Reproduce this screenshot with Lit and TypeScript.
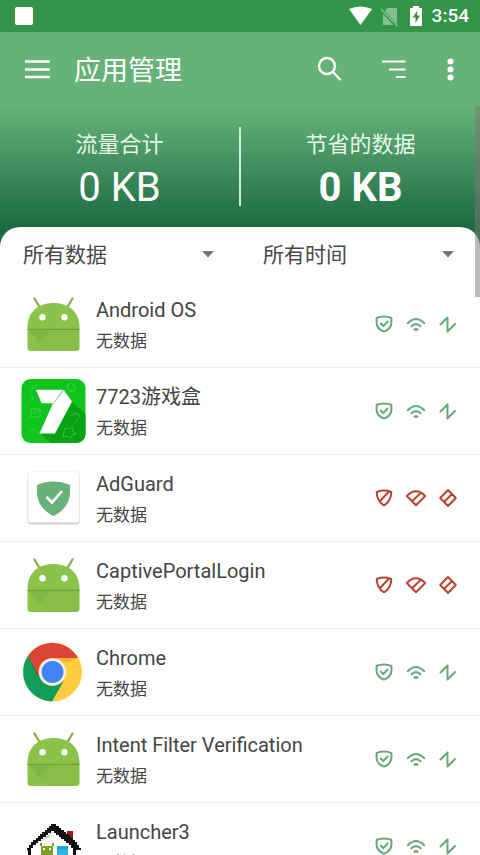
import { LitElement, html, css, svg, nothing } from "lit";
import { customElement, property } from "lit/decorators.js";

type IconName = "android" | "game" | "adguard" | "chrome" | "launcher";

interface AppEntry {
  name: string;
  icon: IconName;
  allowed: boolean;
}

const APPS: AppEntry[] = [
  { name: "Android OS", icon: "android", allowed: true },
  { name: "7723游戏盒", icon: "game", allowed: true },
  { name: "AdGuard", icon: "adguard", allowed: false },
  { name: "CaptivePortalLogin", icon: "android", allowed: false },
  { name: "Chrome", icon: "chrome", allowed: true },
  { name: "Intent Filter Verification", icon: "android", allowed: true },
  { name: "Launcher3", icon: "launcher", allowed: true },
];

const ART = {
  android: svg`
    <path d="M13.500 6.500 18.500 15M51.500 6.500 46.500 15" stroke="#86b04f" stroke-width="2.400" stroke-linecap="round"/>
    <path d="M6.500 37V36C6.500 20 17 11 32.500 11S58.500 20 58.500 36V37Z" fill="#8bc34a"/>
    <path d="M6.500 37H58.500V55.500Q58.500 59 55 59H10Q6.500 59 6.500 55.500Z" fill="#8ac249"/>
    <path d="M7 37.500H30L19 51Z" fill="#7cb043" opacity=".7"/>
    <path d="M19 51 30 37.500H58V58H26Z" fill="#84ba46" opacity=".4"/>
    <path d="M6.500 37.400H58.500" stroke="#6fa03d" stroke-width="1.200"/>
    <circle cx="21.500" cy="25.300" r="3.200" fill="#fff"/><circle cx="43.500" cy="25.300" r="3.200" fill="#fff"/>`,
  game: svg`
    <rect x=".5" y="0" width="64" height="64" rx="9" fill="#0fc51d"/>
    <path d="M50.500 22 64.500 35V55A9 9 0 0 1 55.500 64H30L19 54Z" fill="#06a313"/>
    <g fill="none" stroke="#56dc5a" stroke-width="1" opacity=".6">
      <path d="M10 12q1-5 6-6M9 16l4 3-4 3M46 6l4-2 5 4-3 5-5-2zM10 30h9v8h-9zM12 33l2 2 3-3M50 37q3-4 7-2t-1 6l-2 3M8 54l5-4 6 5 4-2M44 49l4 1 3-2 1 4 3 3-4 1-1 3-4-2-4 1 1-5z"/>
    </g>
    <path d="M15 10.700H42L32 24.200H20.500ZM42.800 11 51 22.500 34 54.500H18.500L32 24.200Z" fill="#fff"/>
    <path d="M42.500 11 32 25" stroke="#9ad99c" stroke-width="1"/>`,
  adguard: svg`
    <rect x="6.500" y="6.500" width="52" height="52" rx="3" fill="#cfcfcf"/>
    <rect x="7" y="5.500" width="51" height="51" rx="3" fill="#fff" stroke="#ededed" stroke-width=".6"/>
    <path d="M32.500 15.500C37 15.500 44 16.500 49 19V26C49 37 42 45.500 32.500 50 23 45.500 16 37 16 26V19C21 16.500 28 15.500 32.500 15.500Z" fill="#67b279"/>
    <path d="M25.500 31 31 36.500 41 25" fill="none" stroke="#fff" stroke-width="2.600"/>`,
  chrome: svg`
    <circle cx="31.500" cy="32" r="29.500" fill="#ffcd40"/>
    <path d="M7 15.800A29.500 29.500 0 0 1 57 18H31.500A14 14 0 0 0 19 38.500Z" fill="#db4437"/>
    <path d="M7 15.800A29.500 29.500 0 0 0 31 61.500L43.500 39.500A14 14 0 0 1 19.500 39Z" fill="#0f9d58"/>
    <path d="M31.500 18H57L46 22.500Z" fill="#e2a52f" opacity=".6"/>
    <path d="M7 15.800 19.500 38.500 15 33.500Z" fill="#8f3c2a" opacity=".7"/>
    <circle cx="31.500" cy="32" r="13.500" fill="#f1f1f1"/>
    <circle cx="31.500" cy="32" r="11" fill="#4285f4"/>`,
  launcher: svg`
    <path d="M46 17h6v12h-6z" fill="#a3161c"/>
    <path d="M12 33 32.500 15 53 33V60H12Z" fill="#fff"/>
    <path d="M18 29 32 17 28 23Z" fill="#c9c9c9"/>
    <path shape-rendering="crispEdges" fill="#111" d="M30 10h5v2h3v2h2v2h3v2h2v2h3v2h2v2h2v2h2v2h2v3h2v3h2v2h-5v25h-3V34h-2v-3h-2v-2h-3v-2h-2v-2h-3v-2h-2v-2h-3v-2h-2v-2h-3v2h-3v2h-2v2h-3v2h-2v2h-3v2h-2v2h-3v3h-2v27h-3V36H6v-2h2v-3h2v-3h2v-2h3v-2h2v-2h2v-2h2v-2h3v-2h2v-2h2v-2h2z"/>
    <path d="M19 29h2v3h10v-3h2v3h-1v10H20V32h-1z" fill="#7da120"/>
    <path d="M22 34h2v2h-2zM28 34h2v2h-2z" fill="#fff"/>
    <path d="M36 32h11v11H36z" fill="#2bb3e3"/><path d="M36 34h11" stroke="#1789b4" stroke-width="1"/>`,
};

const SIGNS = {
  on: [
    svg`<path d="M12 4.500c2.600 0 5.200.5 7.400 1.500v4.700c0 4.200-3.100 7.200-7.400 9-4.300-1.800-7.400-4.800-7.400-9V6c2.200-1 4.800-1.500 7.400-1.500Z"/><path d="m8.700 11.500 2.600 2.600 4.300-4.600"/>`,
    svg`<path d="M3.800 11.200q8.200-8.400 16.400 0M7.400 14.300q4.600-4.400 9.200 0"/><path d="M10.800 17.500h2.400" stroke-width="2.400"/>`,
    svg`<path d="m4.500 12.500 7-7v14l7.500-7.500"/>`,
  ],
  off: [
    svg`<path d="M12 4.600c2.500 0 5 .5 7.300 1.400 0 6-2.500 10.500-7.300 13.500C7.200 16.500 4.700 12 4.700 6c2.300-.9 4.800-1.400 7.300-1.400ZM16.500 6 8 15"/>`,
    svg`<path d="M2.800 10q9.200-9.500 18.400 0L12 19.300ZM17 6.800 8 15.200"/>`,
    svg`<path d="m12 4 7.800 8-7.800 8-7.800-8ZM16 8l-8 8"/>`,
  ],
};
const SIGN_LABELS = ["防护", "Wi-Fi", "移动数据"];

@customElement("status-bar")
class StatusBar extends LitElement {
  static styles = css`
    :host {
      display: flex;
      align-items: center;
      height: 32px;
      flex: none;
      padding: 0 11px 0 15px;
      background: #33954a;
      color: #fff;
    }
    .note {
      width: 18px;
      height: 18px;
      border-radius: 2px;
      background: #fff;
    }
    .spacer {
      flex: 1;
    }
    .glyphs {
      width: 76px;
      height: 24px;
      margin-right: 8px;
    }
    .time {
      font-size: 19px;
      line-height: 24px;
      font-weight: 500;
    }
  `;
  render() {
    return html`
      <span class="note"></span>
      <span class="spacer"></span>
      <svg class="glyphs" viewBox="0 0 76 24" fill="#fff" aria-hidden="true">
        <path d="M1 5Q12.500 0 24 5L12.500 21Z" />
        <path d="M39 4h10v16L37 7zM35 10 45.500 21H35z" opacity=".4" />
        <path d="m33 5 16.500 17" stroke="#fff" stroke-width="1.500" opacity=".4" />
        <path fill-rule="evenodd" d="M65 2h6v2h3v18H62V4h3zM69.500 6.500 64.500 13.500h3v5.500l4.500-7.500h-3z" />
      </svg>
      <span class="time">3:54</span>
    `;
  }
}

@customElement("app-bar")
class AppBar extends LitElement {
  static styles = css`
    :host {
      display: flex;
      align-items: center;
      height: 74px;
      flex: none;
      padding: 0 5px 0 12px;
      background: #67b279;
      color: #fff;
    }
    h1 {
      flex: 1;
      margin: 0;
      padding: 4px 0 0 12px;
      font-size: 27px;
      line-height: 40px;
      font-weight: 400;
    }
    button {
      display: grid;
      place-items: center;
      width: 50px;
      height: 48px;
      padding: 0;
      border: 0;
      background: none;
      color: inherit;
    }
    .wide {
      width: 64px;
    }
    svg {
      width: 32px;
      height: 32px;
      fill: none;
      stroke: currentColor;
      stroke-width: 2.4;
    }
  `;
  render() {
    return html`
      <button aria-label="菜单">
        <svg viewBox="0 0 32 32"><path d="M4 8.500h25M4 16.500h25M4 24h25" /></svg>
      </button>
      <h1>应用管理</h1>
      <button class="wide" aria-label="搜索">
        <svg viewBox="0 0 32 32"><circle cx="14" cy="13" r="8" /><path d="m19.500 18.500 8 8.500" /></svg>
      </button>
      <button class="wide" aria-label="排序">
        <svg viewBox="0 0 32 32"><path d="M5 8.500h23.500M12 16.500h16.500M19 24h9.500" stroke-width="2" /></svg>
      </button>
      <button aria-label="更多">
        <svg viewBox="0 0 32 32">
          <g fill="currentColor" stroke="none">
            <circle cx="16.500" cy="8.500" r="3" /><circle cx="16.500" cy="16.500" r="3" /><circle cx="16.500" cy="24.500" r="3" />
          </g>
        </svg>
      </button>
    `;
  }
}

@customElement("data-filter")
class DataFilter extends LitElement {
  @property() label = "";
  @property() value = "";
  static styles = css`
    :host {
      display: grid;
      align-items: center;
      flex: 1;
    }
    select,
    svg {
      grid-area: 1 / 1;
    }
    select {
      appearance: none;
      width: 100%;
      height: 54px;
      padding: 2px 48px 0 23px;
      border: 0;
      background: none;
      color: #484848;
      font: inherit;
      font-size: 21px;
    }
    svg {
      justify-self: end;
      width: 14px;
      height: 8px;
      margin-right: 25px;
      fill: #757575;
      pointer-events: none;
    }
  `;
  render() {
    return html`
      <select aria-label=${this.label}>
        <option>${this.value}</option>
      </select>
      <svg viewBox="0 0 14 8"><path d="M1 1h12L7 7.500z" /></svg>
    `;
  }
}

@customElement("app-row")
class AppRow extends LitElement {
  @property({ attribute: false }) app?: AppEntry;
  static styles = css`
    :host {
      display: flex;
      align-items: center;
      box-sizing: border-box;
      height: 87px;
      padding: 0 16px 0 21px;
      border-bottom: 1px solid #ececec;
    }
    .art {
      width: 66px;
      height: 66px;
      flex: none;
      fill: none;
    }
    .text {
      flex: 1;
      min-width: 0;
      padding: 4px 0 0 9px;
      color: #444;
    }
    .name {
      font-size: 20px;
      line-height: 30px;
      white-space: nowrap;
    }
    .info {
      font-size: 17px;
      line-height: 32px;
    }
    button {
      display: grid;
      place-items: center;
      width: 32px;
      height: 48px;
      padding: 0;
      border: 0;
      background: none;
      color: #67a87a;
    }
    .blocked {
      color: #b8452f;
    }
    button svg {
      width: 24px;
      height: 24px;
      fill: none;
      stroke: currentColor;
      stroke-width: 2;
      stroke-linejoin: round;
      stroke-linecap: round;
    }
  `;
  render() {
    const app = this.app;
    if (!app) return nothing;
    const signs = app.allowed ? SIGNS.on : SIGNS.off;
    return html`
      <svg class="art" viewBox="0 -1 66 66" aria-hidden="true">${ART[app.icon]}</svg>
      <div class="text">
        <div class="name">${app.name}</div>
        <div class="info">无数据</div>
      </div>
      ${signs.map(
        (sign, i) => html`<button class=${app.allowed ? "" : "blocked"} aria-label=${SIGN_LABELS[i]}>
          <svg viewBox="0 0 24 24">${sign}</svg>
        </button>`
      )}
    `;
  }
}

@customElement("app-root")
class AppRoot extends LitElement {
  static styles = css`
    :host {
      display: flex;
      flex-direction: column;
      height: 100vh;
      overflow: hidden;
      background: #fff;
      font-family: Roboto, "Noto Sans CJK SC", sans-serif;
    }
    main {
      position: relative;
      flex: 1;
      min-height: 0;
      overflow: hidden;
    }
    .stats {
      display: flex;
      align-items: flex-start;
      height: 121px;
      padding-bottom: 20px;
      background: linear-gradient(#67b279, #1c6a43 121px);
      color: #fff;
      text-align: center;
    }
    .stat {
      flex: 1;
      padding-top: 23px;
    }
    .caption {
      font-size: 22px;
      line-height: 32px;
      color: #e6f7ea;
    }
    .amount {
      font-size: 40px;
      line-height: 54px;
    }
    .strong {
      font-weight: 700;
    }
    .divider {
      width: 2px;
      height: 79px;
      margin-top: 21px;
      background: #d3ecd9;
    }
    .panel {
      margin-top: -20px;
      position: relative;
      border-radius: 20px 20px 0 0;
      background: #fff;
    }
    .filters {
      display: flex;
    }
    ul {
      margin: 0;
      padding: 0;
      list-style: none;
    }
    .thumb {
      position: absolute;
      top: 0;
      right: 0;
      width: 5px;
      height: 191px;
      background: rgba(120, 120, 120, 0.5);
    }
  `;
  render() {
    return html`
      <status-bar></status-bar>
      <app-bar></app-bar>
      <main>
        <section class="stats">
          <div class="stat">
            <div class="caption">流量合计</div>
            <div class="amount">0 KB</div>
          </div>
          <div class="divider"></div>
          <div class="stat">
            <div class="caption">节省的数据</div>
            <div class="amount strong">0 KB</div>
          </div>
        </section>
        <section class="panel">
          <div class="filters">
            <data-filter label="数据类型" value="所有数据"></data-filter>
            <data-filter label="时间范围" value="所有时间"></data-filter>
          </div>
          <ul>
            ${APPS.map((app) => html`<li><app-row .app=${app}></app-row></li>`)}
          </ul>
        </section>
        <div class="thumb"></div>
      </main>
    `;
  }
}
